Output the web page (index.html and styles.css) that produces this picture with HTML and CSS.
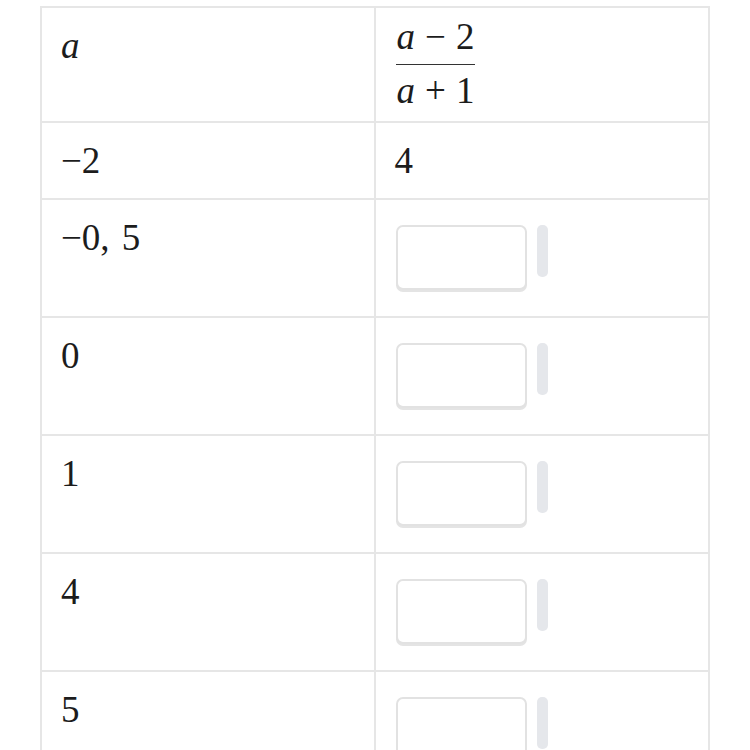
FILE: index.html
```html
<!DOCTYPE html>
<html>
<head>
<meta charset="utf-8">
<link rel="stylesheet" href="styles.css">
</head>
<body>
<table class="tbl">
  <tr class="row-head">
    <td class="cell"><span class="math"><i>a</i></span></td>
    <td class="cell">
      <span class="frac">
        <span class="num"><i>a</i><span class="op">−</span>2</span>
        <span class="den"><i>a</i><span class="op">+</span>1</span>
      </span>
    </td>
  </tr>
  <tr class="row-short">
    <td class="cell"><span class="math">−2</span></td>
    <td class="cell"><span class="math">4</span></td>
  </tr>
  <tr class="row">
    <td class="cell"><span class="math">−0,<span class="sp"></span>5</span></td>
    <td class="cell"><div class="answer"><div class="box"></div><div class="bar"></div></div></td>
  </tr>
  <tr class="row">
    <td class="cell"><span class="math">0</span></td>
    <td class="cell"><div class="answer"><div class="box"></div><div class="bar"></div></div></td>
  </tr>
  <tr class="row">
    <td class="cell"><span class="math">1</span></td>
    <td class="cell"><div class="answer"><div class="box"></div><div class="bar"></div></div></td>
  </tr>
  <tr class="row">
    <td class="cell"><span class="math">4</span></td>
    <td class="cell"><div class="answer"><div class="box"></div><div class="bar"></div></div></td>
  </tr>
  <tr class="row">
    <td class="cell"><span class="math">5</span></td>
    <td class="cell"><div class="answer"><div class="box"></div><div class="bar"></div></div></td>
  </tr>
</table>
</body>
</html>
```
FILE: styles.css
```css
html, body {
  margin: 0;
  background: #ffffff;
}
body {
  padding: 6px 0 0 40px;
  font-family: "Liberation Serif", "Times New Roman", serif;
  color: #1c1c1c;
}
.tbl {
  border-collapse: collapse;
  width: 670px;
  table-layout: fixed;
}
.cell {
  border: 2px solid #e6e6e6;
  vertical-align: top;
  padding: 17px 20px 10px 19px;
  font-size: 37px;
  line-height: 42px;
  width: 50%;
}
.row-head { height: 115px; }
.row-short { height: 77px; }
.row { height: 118px; }
.math i, .frac i { font-style: italic; }
.op { padding: 0 10px; }
.sp { display: inline-block; width: 12px; }
.row-head .cell:first-child { padding-top: 17px; }
.row-head .cell:last-child { padding-top: 8px; padding-left: 20px; }
.frac {
  display: inline-flex;
  flex-direction: column;
  align-items: center;
  line-height: 36px;
}
.num { padding: 0 1px 9px; }
.den {
  border-top: 1.5px solid #333333;
  padding: 8px 1px 0;
  align-self: stretch;
  text-align: center;
}
.answer {
  display: flex;
  align-items: flex-start;
  gap: 10px;
  padding-top: 8px;
  padding-left: 1px;
}
.box {
  width: 127px;
  height: 61px;
  border: 2px solid #e2e2e2;
  border-radius: 7px;
  box-shadow: 0 2px 0 #e4e4e4;
  background: #ffffff;
}
.bar {
  width: 11px;
  height: 52px;
  border-radius: 5px;
  background: #e5e7eb;
}
```
